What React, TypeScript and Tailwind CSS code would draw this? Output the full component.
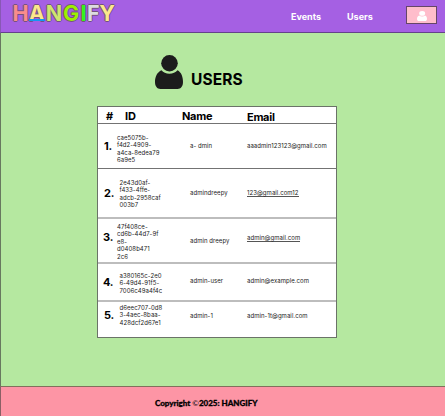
const logo = [
  { ch: 'H', cls: 'w-[15px] text-[#f98c8c]' },
  { ch: 'A', cls: 'w-[17.5px] text-[#fbe88b]' },
  { ch: 'N', cls: 'w-[17px] text-[#cfe56f]' },
  { ch: 'G', cls: 'w-[17px] text-[#9df000]' },
  { ch: 'I', cls: 'w-[8px] text-[#33f21a]' },
  { ch: 'F', cls: 'w-[11.5px] text-[#dcdcdf]' },
  { ch: 'Y', cls: 'w-[16px] text-[#fbe88b]' },
];

const rows = [
  { n: '1.', id: ['cae5075b-', 'f4d2-4909-', 'a4ca-8edea79', '6a9e5'], name: 'a- dmin', email: 'aaadmin123123@gmail.com', row: 'h-[45px] border-b border-[#737373]', num: 'pl-[6px] pt-[15px]', idc: 'pl-0 pt-[10px]', nc: 'pt-[18px]', ec: 'pt-[18px]', link: false },
  { n: '2.', id: ['2e43d0af-', 'f433-4ffe-', 'adcb-2958caf', '003b7'], name: 'admindreepy', email: '123@gmail.com12', row: 'h-[50px] border-b-2 border-[#bdbdbd]', num: 'pl-[6px] pt-[17px]', idc: 'pl-[2.5px] pt-[10px]', nc: 'pt-[20px]', ec: 'pt-[20px]', link: true },
  { n: '3.', id: ['47f408ce-', 'cd6b-44d7-9f', 'e8-', 'd0408b471', '2c6'], name: 'admin dreepy', email: 'admin@gmail.com', row: 'h-[45px] border-b-2 border-[#bdbdbd]', num: 'pl-[5px] pt-[11px]', idc: 'pl-0 pt-[4px]', nc: 'pt-[18px]', ec: 'pt-[15px]', link: true },
  { n: '4.', id: ['a380165c-2e0', '6-49d4-91f5-', '7006c49a4f4c'], name: 'admin-user', email: 'admin@example.com', row: 'h-[38px] border-b-2 border-[#bdbdbd]', num: 'pl-[5px] pt-[11px]', idc: 'pl-[2.5px] pt-[8px]', nc: 'pt-[13px]', ec: 'pt-[13px]', link: false },
  { n: '5.', id: ['d6eec707-0d8', '3-4aec-8baa-', '428dcf2d67e1'], name: 'admin-1', email: 'admin-1t@gmail.com', row: 'h-[35px]', num: 'pl-[6px] pt-[6px]', idc: 'pl-[2.5px] pt-[2px]', nc: 'pt-[10px]', ec: 'pt-[10px]', link: false },
];

function Person({ className, fill }: { className: string; fill: string }) {
  return (
    <svg className={className} viewBox="0 0 28 35" preserveAspectRatio="none" fill={fill}>
      <ellipse cx="14.5" cy="8.5" rx="8.3" ry="8.5" />
      <path d="M6.5 15.6C8.3 18 11 19.2 14.4 19.2s6.2-1.2 8.1-3.6c3.7 2 5.5 6.4 5.5 12.2 0 4.4-2.2 7.2-5.4 7.2H5.4C2.2 35 0 32.2 0 27.8c0-5.8 2.3-10.2 6.5-12.2Z" />
    </svg>
  );
}

export default function App() {
  return (
    <div className="flex h-[416px] w-[445px] flex-col overflow-hidden bg-[#b5e8a0] font-['Inter',sans-serif] text-black">
      <header className="flex h-[33px] shrink-0 border-b border-l border-b-[#65428b] border-l-[#8858b5] bg-[#a560e3]">
        <div className="flex w-[277px] pl-[12px] pt-[2px]">
          {logo.map((l, i) => (
            <span key={i} className={`${l.cls} relative text-[21.5px] leading-[22px] font-bold text-center [text-shadow:1px_0_#75527f,-1px_0_#75527f,0_1px_#75527f,0_-1px_#75527f]`}>
              <span className="flex justify-center">{l.ch}</span>
              {i === 1 && <span className="absolute top-[17px] left-[1px] h-[2px] w-[15.5px] bg-[#1597f0]" />}
            </span>
          ))}
        </div>
        <nav className="flex pt-[11px] pl-[13px] text-[9px] leading-[11px] font-bold text-white">
          <span className="w-[56px]">Events</span>
          <span className="w-[59px]">Users</span>
        </nav>
        <button className="mt-[6px] flex h-[18px] w-[31px] items-end justify-center border border-[#664667] bg-[#ffbdcb] pb-[2px]">
          <Person className="h-[10px] w-[10px]" fill="#ffffff" />
        </button>
      </header>

      <main className="flex grow flex-col border-l border-[#68785f]">
        <div className="flex h-[73px] pt-[22px] pl-[154px]">
          <Person className="h-[34px] w-[28px]" fill="#1c1c1c" />
          <h1 className="pt-[15px] pl-[8px] text-[15.5px] leading-[20px] font-bold tracking-[0.1px]">USERS</h1>
        </div>
        <section className="ml-[96px] h-[232px] w-[240px] border border-[#6b7368] bg-white">
          <div className="flex h-[17px] border-b border-[#737373] text-[11px] leading-[13px] font-bold">
            <span className="w-[27px] pt-[3px] pl-[8px]">#</span>
            <span className="w-[57px] pt-[3px]">ID</span>
            <span className="w-[65px] pt-[3px] tracking-[-0.3px]">Name</span>
            <span className="pt-[4px] tracking-[-0.3px]">Email</span>
          </div>
          {rows.map((r) => (
            <div key={r.n} className={`${r.row} flex text-[6px] leading-[7.4px] tracking-[0.06px] whitespace-nowrap text-[#222222]`}>
              <span className={`${r.num} w-[19px] text-[11px] leading-[14px] font-bold tracking-[-0.2px] text-black`}>{r.n}</span>
              <div className={`${r.idc} w-[73px]`}>
                {r.id.map((t) => <div key={t}>{t}</div>)}
              </div>
              <span className={`${r.nc} w-[57px]`}>{r.name}</span>
              <div className={r.ec}>
                <span className={r.link ? 'block border-b border-[#555555]' : 'block'}>{r.email}</span>
              </div>
            </div>
          ))}
        </section>
      </main>

      <footer className="h-[30px] shrink-0 border-t border-l border-t-[#82705c] border-l-[#8a6065] bg-[#fd95a5] pt-[11px] pl-[154px] font-['Lato',sans-serif] text-[8px] leading-[10px] font-black whitespace-nowrap [-webkit-text-stroke:0.3px_#000]">
        Copyright <span className="font-normal [-webkit-text-stroke:0px]">©</span>2025: HANGIFY
      </footer>
    </div>
  );
}
